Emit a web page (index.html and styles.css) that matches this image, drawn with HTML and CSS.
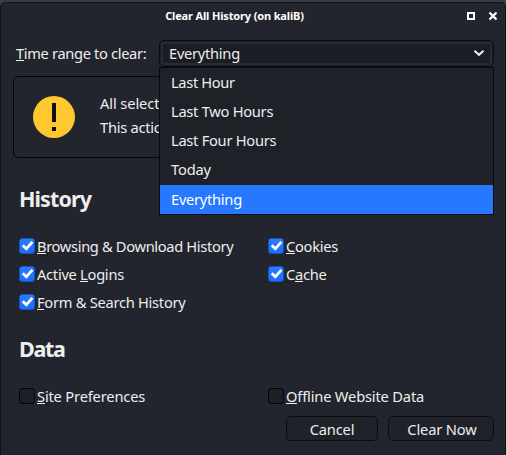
FILE: index.html
```html
<!DOCTYPE html>
<html lang="en">
<head>
<meta charset="utf-8">
<title>Clear All History</title>
<link rel="stylesheet" href="styles.css">
</head>
<body>
<div class="dialog">
  <header class="titlebar">
    <span class="title">Clear All History (on kaliB)</span>
    <span class="controls">
      <svg width="8" height="8" viewBox="0 0 8 8"><rect x="1" y="1" width="6" height="6" fill="none" stroke="#fff" stroke-width="2"/></svg>
      <svg width="10" height="10" viewBox="0 0 10 10"><path d="M1.5 1.5l7 7M8.500 1.500l-7 7" stroke="#fff" stroke-width="2.200"/></svg>
    </span>
  </header>
  <main class="content">
    <div class="range">
      <label class="range-label"><u>T</u>ime range to clear:</label>
      <div class="select">
        <div class="select-value"><span>Everything</span>
          <svg width="12" height="8" viewBox="0 0 12 8"><path d="M1.500 1.700L6 5.800l4.500-4.100" fill="none" stroke="#eeeeec" stroke-width="2"/></svg>
        </div>
        <ul class="menu">
          <li class="tight">Last Hour</li>
          <li>Last Two Hours</li>
          <li>Last Four Hours</li>
          <li class="today">Today</li>
          <li class="selected">Everything</li>
        </ul>
      </div>
    </div>
    <div class="notice">
      <svg width="42" height="42" viewBox="0 0 42 42"><circle cx="21" cy="21" r="21" fill="#ffc730"/><path d="M19 7h4v19h-4zM19 31h4v4h-4z" fill="#111"/></svg>
      <div class="notice-text"><p>All select</p><p>This actio</p></div>
    </div>
    <h2 class="heading">History</h2>
    <div class="options">
      <label class="option"><span class="box checked"><svg width="16" height="16" viewBox="0 0 16 16"><path d="M3.700 7.300l3.600 3.500 6.100-7" /></svg></span><span class="tight"><u>B</u>rowsing &amp; Download History</span></label>
      <label class="option"><span class="box checked"><svg width="16" height="16" viewBox="0 0 16 16"><path d="M3.700 7.300l3.600 3.500 6.100-7" /></svg></span><span><u>C</u>ookies</span></label>
      <label class="option"><span class="box checked"><svg width="16" height="16" viewBox="0 0 16 16"><path d="M3.700 7.300l3.600 3.500 6.100-7" /></svg></span><span>Active <u>L</u>ogins</span></label>
      <label class="option"><span class="box checked"><svg width="16" height="16" viewBox="0 0 16 16"><path d="M3.700 7.300l3.600 3.500 6.100-7" /></svg></span><span>C<u>a</u>che</span></label>
      <label class="option"><span class="box checked"><svg width="16" height="16" viewBox="0 0 16 16"><path d="M3.700 7.300l3.600 3.500 6.100-7" /></svg></span><span><u>F</u>orm &amp; Search History</span></label>
    </div>
    <h2 class="heading data">Data</h2>
    <div class="options">
      <label class="option"><span class="box"></span><span class="loose"><u>S</u>ite Preferences</span></label>
      <label class="option"><span class="box"></span><span class="loose"><u>O</u>ffline Website Data</span></label>
    </div>
    <div class="actions">
      <button class="button cancel">Cancel</button>
      <button class="button clear">Clear Now</button>
    </div>
  </main>
</div>
</body>
</html>
```
FILE: styles.css
```css
* { box-sizing: border-box; }
body {
  margin: 0;
  padding-top: 2px;
  height: 455px;
  overflow: hidden;
  background: #3a3c43;
  color: #eeeeec;
  font: 14.667px/20px "Noto Sans", sans-serif;
  letter-spacing: -0.27px;
}
p, h2, ul { margin: 0; padding: 0; }
u { text-decoration: none; box-shadow: inset 0 -1px #eeeeec; display: inline-block; height: 18px; line-height: 20px; vertical-align: top; }
.tight { letter-spacing: -0.34px; }
.loose { letter-spacing: -0.17px; }
.dialog {
  height: 460px;
  background: #23252e;
  border: 1px solid #111217;
  border-radius: 5px 5px 0 0;
}
.titlebar {
  height: 27px;
  display: grid;
  grid-template-columns: 1fr auto 1fr;
  align-items: center;
  padding: 0 7px 1px 0;
}
.title {
  grid-column: 2;
  font-size: 11px;
  font-weight: 700;
  color: #fff;
  white-space: nowrap;
  margin-left: -30px;
  letter-spacing: -0.15px;
}
.controls { display: flex; align-items: center; justify-content: flex-end; gap: 13px; }
.content { padding: 10px 11px 0 12px; }
.range { display: flex; height: 27px; }
.range-label { width: 146px; padding: 3px 0 0 3px; white-space: nowrap; letter-spacing: -0.34px; }
.select { position: relative; width: 335px; }
.select-value {
  display: flex;
  align-items: center;
  justify-content: space-between;
  height: 27px;
  padding: 0 8px 2px 9px;
  background: #1b1d24;
  border: 1px solid #0c0d11;
  border-radius: 5px;
  box-shadow: inset 0 0 0 1px #1b1d23, inset 0 0 0 3px #292b32;
}
.menu {
  position: absolute;
  top: 27px;
  left: 0;
  width: 335px;
  background: #1f2129;
  border: 1px solid #08090c;
  list-style: none;
  z-index: 2;
}
.menu li { height: 29px; line-height: 29px; padding-left: 11px; }
.menu .today { height: 30px; letter-spacing: -0.17px; }
.menu .selected { background: #2777ff; color: #fff; }
.notice {
  height: 82px;
  margin-top: 9px;
  border: 1px solid #050507;
  border-radius: 5px;
  display: flex;
  align-items: center;
  padding-left: 19px;
  gap: 25px;
}
.notice-text { width: 80px; letter-spacing: -0.1px; white-space: nowrap; line-height: 24px; margin-top: -4px; }
.notice-text p + p { letter-spacing: -0.27px; }
.heading { font-size: 21.5px; line-height: 30px; font-weight: 700; letter-spacing: -0.9px; margin: 26px 0 0 6px; }
.options {
  display: grid;
  grid-template-columns: 249px 1fr;
  grid-auto-rows: 28px;
  margin: 18px 0 0 6px;
}
.option { display: flex; align-items: center; gap: 2px; white-space: nowrap; }
.box {
  width: 16px;
  height: 16px;
  border: 1px solid #050507;
  border-radius: 3px;
  background: #1d1f26;
}
.box.checked { background: linear-gradient(#2c7aff, #1b6dfa); border-color: #1253be; }
.box svg { display: block; margin: -1px; fill: none; stroke: #fff; stroke-width: 2.800; }
.heading.data { margin-top: 18px; letter-spacing: -1.3px; }
.actions { display: flex; justify-content: flex-end; gap: 10px; margin-top: 6px; }
.button {
  height: 25px;
  padding: 0;
  font: inherit;
  letter-spacing: -0.15px;
  color: inherit;
  background: #20222a;
  border: 1px solid #0b0c10;
  border-radius: 5px;
}
.cancel { width: 92px; }
.clear { width: 106px; padding-left: 2px; }
```
